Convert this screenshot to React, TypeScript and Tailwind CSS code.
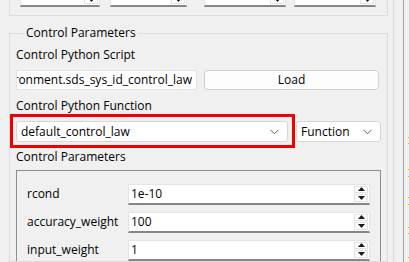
import React from "react";

const FONT = { fontFamily: '"Open Sans", "Liberation Sans", sans-serif' };

function Chevron() {
  return (
    <svg width="9" height="6" viewBox="0 0 9 6" className="shrink-0">
      <path d="M0.5 0.8 L4.5 4.8 L8.5 0.8" fill="none" stroke="#5f5f5f" strokeWidth="1" />
    </svg>
  );
}

function SpinArrows() {
  return (
    <div className="flex h-full w-[14px] shrink-0 flex-col gap-[1px] py-[1px]">
      <div className="flex flex-1 items-center justify-center border border-[#e2e2e2] bg-white">
        <svg width="7" height="4" viewBox="0 0 7 4">
          <path d="M0 4 L3.5 0 L7 4 Z" fill="#1a1a1a" />
        </svg>
      </div>
      <div className="flex flex-1 items-center justify-center border border-[#e2e2e2] bg-white">
        <svg width="7" height="4" viewBox="0 0 7 4">
          <path d="M0 0 L3.5 4 L7 0 Z" fill="#1a1a1a" />
        </svg>
      </div>
    </div>
  );
}

function SpinBox({ value, className }: { value: string; className?: string }) {
  return (
    <div
      className={`flex h-[21px] items-center border border-[#e5e5e5] border-b-2 border-b-[#868686] bg-white pl-[2px] pr-[1px] ${className ?? ""}`}
    >
      <span className="flex-1 truncate text-[12px] text-black">{value}</span>
      <SpinArrows />
    </div>
  );
}

function Combo({ value, className }: { value: string; className?: string }) {
  return (
    <div
      className={`flex h-[21px] items-center rounded-[3px] border border-[#d6d6d6] bg-white pl-[4px] pr-[8px] ${className ?? ""}`}
    >
      <span className="flex-1 truncate text-[12px] text-black">{value}</span>
      <Chevron />
    </div>
  );
}

const PARAMS = [
  { name: "rcond", value: "1e-10" },
  { name: "accuracy_weight", value: "100" },
  { name: "input_weight", value: "1" },
];

// Orange marks peeking in from the panel cut off at the right edge.
const MARKS = [137, 143, 169, 176, 197, 204, 227, 233, 257];

export default function App() {
  return (
    <div className="flex h-[262px] w-[409px] overflow-hidden bg-[#f0f0f0]" style={FONT}>
      <div className="flex w-[394px] shrink-0 flex-col border-r border-[#dadada] pl-[9px] pr-[5px]">
        {/* previous group, only its bottom is on screen */}
        <div className="flex h-[16px] shrink-0 flex-col border-x border-b border-[#dcdcdc]">
          <div className="-mt-[14px] flex text-[12px]">
            <SpinBox value="1" className="ml-[10px] w-[80px]" />
            <SpinBox value="0.000000" className="ml-[10px] w-[77px]" />
            <SpinBox value="0.000000" className="ml-[17px] w-[82px]" />
            <SpinBox value="0.0000" className="ml-[8px] w-[82px]" />
          </div>
        </div>

        <fieldset className="mt-[9px] flex min-h-0 flex-1 flex-col border border-[#dcdcdc] px-[6px] pb-[6px]">
          <legend className="ml-[8px] px-[2px] text-[12px] leading-[16px] text-black">
            Control Parameters
          </legend>

          <div className="mt-[6px] h-[16px] text-[12px] leading-[16px] text-black">Control Python Script</div>
          <div className="mt-[7px] flex h-[22px] gap-[7px]">
            <div className="flex w-[181px] items-center justify-end overflow-hidden whitespace-nowrap border border-[#e3e3e3] bg-white pr-[4px] text-[12px] text-black">
              environment.sds_sys_id_control_law
            </div>
            <button
              type="button"
              className="flex w-[175px] items-center justify-center rounded-[4px] border border-[#d0d0d0] bg-[#fdfdfd] text-[12px] text-black"
            >
              Load
            </button>
          </div>

          <div className="mt-[8px] h-[16px] text-[12px] leading-[16px] text-black">Control Python Function</div>
          <div className="relative mt-[7px] flex h-[22px] gap-[8px]">
            <Combo value="default_control_law" className="w-[272px]" />
            <Combo value="Function" className="w-[85px]" />
            <div className="pointer-events-none absolute -left-[6px] -top-[7px] h-[34px] w-[285px] border-[3px] border-[#f00000]" />
          </div>

          <div className="mt-[7px] h-[16px] text-[12px] leading-[16px] text-black">Control Parameters</div>
          <div className="mt-[5px] flex flex-1 flex-col gap-[6px] border border-[#8c8c8c] border-b-0 px-[10px] pt-[12px]">
            {PARAMS.map((p) => (
              <div key={p.name} className="flex h-[22px] shrink-0 items-center">
                <span className="w-[101px] shrink-0 text-[12px] text-black">{p.name}</span>
                <SpinBox value={p.value} className="flex-1" />
              </div>
            ))}
          </div>
        </fieldset>
      </div>

      <div className="ml-[9px] h-full w-px shrink-0 bg-[#a3a3a3]" />
      <svg width="6" height="262" viewBox="0 0 6 262" className="shrink-0">
        {MARKS.map((y) => (
          <rect key={y} x="4" y={y} width="2" height="1" fill="#f3b12a" />
        ))}
      </svg>
    </div>
  );
}
